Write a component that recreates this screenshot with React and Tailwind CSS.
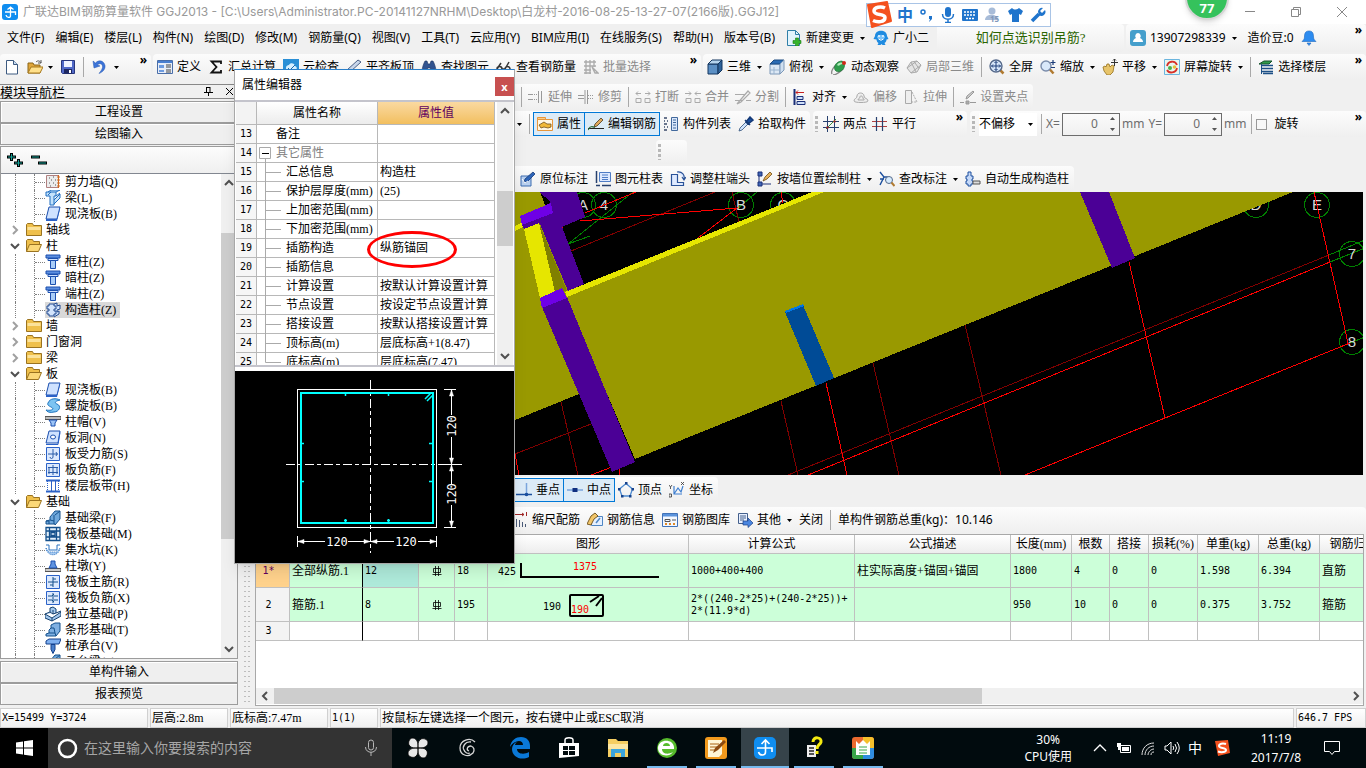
import React, { useState } from 'react';

const SIM = "font-['Liberation_Serif','Noto_Sans_CJK_SC',serif]";
const MONO = "font-['DejaVu_Sans_Mono',monospace] text-[10px]";

// toolbar and tree drawings, all on a 16 x 16 grid
const ICONS = {
    new: <><path d="M2.500 1.500h7l4 4v9.500h-11z" fill="#fff" stroke="#3d5a80" /><path d="M9.500 1.500v4h4" fill="#c7dcf2" stroke="#3d5a80" /></>,
    open: <><path d="M1 14V4h5l1 2h6v8z" fill="#e0a63a" stroke="#8a6417" /><path d="M1 14l3-6h12l-3 6z" fill="#ffe08a" stroke="#a87a1e" /><path d="M9 3c2-2 4-1 5 1m0-3v3h-3" fill="none" stroke="#555" /></>,
    save: <><path d="M1.500 1.500h13v13h-12l-1-1z" fill="#5068c8" stroke="#28367c" /><path d="M4 2h8v6H4z" fill="#eef2ff" /><path d="M4 10h8v4.500H4z" fill="#1d2760" /><path d="M9 11h2v3H9z" fill="#fff" /></>,
    undo: <path d="M2 2l1 7 6-2-2.500-1.200C9 3.500 12 5 11.500 8.500 11 11 9 13 8 14.500c4-1.500 6.500-4.500 6-8C13 2 8 0 4.500 4z" fill="#3c74d8" stroke="#2456b0" strokeWidth=".5" />,
    define: <><path d="M.5 1.500h15v13H.5z" fill="#e8eef8" stroke="#4a6ea8" /><path d="M1 2h14v2H1z" fill="#4a7fd0" /><path d="M2 6h5v3H2zM2 11h5v2H2z" fill="#6d9be0" /><path d="M9 6h5M9 8h5M9 11h5M9 13h5" stroke="#444" /></>,
    sigma: <path d="M13 5V2.500H3.500L8.500 8l-5 5.500H13V11" fill="none" stroke="#111" strokeWidth="1.800" />,
    cloud: <><path d="M0 0h16v16H0z" fill="#2a8fd6" /><path d="M3 9c0-3 3-3 3-3 1-3 6-2 6 1 3 1 2 5-1 5H5c-2 0-2-2-2-3z" fill="#d6efff" /><path d="M5 9l2 2 5-5" fill="none" stroke="#1769ae" /></>,
    slab: <><path d="M1 11L12 1l3 2L4 13z" fill="#c8d6ea" stroke="#4a5f86" /><path d="M1 13l4 2 10-4" fill="none" stroke="#e0a020" strokeWidth="2" /></>,
    find: <path d="M1 13c0-5 2-9 3-11h2l1 3h2l1-3h2c1 2 3 6 3 11H9.500V9h-3v4z" fill="#31538f" stroke="#1b3260" strokeWidth=".6" />,
    glasses: <path d="M1 10l4-6M9 10l4-7M1 10a2.500 2.500 0 1 0 5 0 2.500 2.500 0 1 0-5 0zm8 0a2.500 2.500 0 1 0 5 0 2.500 2.500 0 1 0-5 0zM6 10h3" fill="none" stroke="#333" strokeWidth="1.500" />,
    batch: <path d="M1 3h12M1 7h12M1 11h7M1 14h7M3 1v14M7 1v14M11 1v7M9 8l6 6-3 0z" fill="none" stroke="#aaa" strokeWidth="1.300" />,
    cube: <><path d="M1 5h10v10H1z" fill="#5b8fc4" stroke="#12355e" /><path d="M1 5l4-4h10l-4 4z" fill="#b5d4ee" stroke="#12355e" /><path d="M11 5l4-4v10l-4 4z" fill="#2f6299" stroke="#12355e" /></>,
    top: <><path d="M1 5h10v10H1z" fill="#dce8f5" stroke="#7c98b8" /><path d="M1 5l4-4h10l-4 4z" fill="#2b6cb5" stroke="#1c4a80" /><path d="M11 5l4-4v10l-4 4z" fill="#cfdff0" stroke="#7c98b8" /><path d="M5 8v7M1 11h10" stroke="#9ab4cf" /></>,
    orbit: <><path d="M1 15c-1-2 1-6 4-9M2 16c3 0 7-3 10-6" fill="none" stroke="#888" strokeWidth="1.300" /><path d="M4 11c-2-4 2-9 7-9 4 2 3 8-1 10-2 1-5 1-6-1z" fill="#2f9c4c" stroke="#176a30" strokeWidth=".6" /><path d="M6 6c2-3 5-3 6-1-3 0-4 3-6 1z" fill="#b4ecbc" /><circle cx="13" cy="4" r="2" fill="#d02818" /></>,
    local: <path d="M1 9l4-6 6-1 4 4-4 7-6 1zM5 3l5 10M1 9l10-7M5 14l10-8M8 2.500l5 7" fill="#e4e4e4" stroke="#aaa" />,
    fit: <><path d="M10.500 10.500l4 4" stroke="#b07a30" strokeWidth="2.500" /><circle cx="7" cy="7" r="6" fill="#d9e8fa" stroke="#55698a" strokeWidth="1.400" /><path d="M7 2.500v9M2.500 7h9M5.500 4L7 2.500 8.500 4M5.500 10L7 11.500 8.500 10M4 5.500L2.500 7 4 8.500M10 5.500L11.500 7 10 8.500" fill="none" stroke="#1c3c78" /></>,
    zoom: <><path d="M9.500 10l4 4.500" stroke="#b07a30" strokeWidth="2.500" /><circle cx="6" cy="7" r="5" fill="#d9e8fa" stroke="#7a8cab" strokeWidth="1.400" /><path d="M13 1v5M10.500 3.500h5M11 8.500h4" stroke="#1c3c78" strokeWidth="1.200" /></>,
    pan: <><path d="M1 8l2-1 1 1 1-3h2l1 3 2-2 2 1-1 6-3 3H5l-3-4z" fill="#e7c46a" stroke="#94701c" strokeWidth=".8" /><path d="M12.500 0v7M9 3.500h7M11 1.500L12.500 0 14 1.500" fill="none" stroke="#333" /></>,
    rotate: <><path d="M.5.5h15v15H.5z" fill="#e8f6f0" stroke="#6bb5de" /><path d="M3 7c1-5 8-6 10-1M13 9c-1 5-8 6-10 2" fill="none" stroke="#d83028" strokeWidth="1.800" /><circle cx="6" cy="9" r="2" fill="#4bb04b" /><circle cx="10.500" cy="8" r="1.800" fill="#e8c038" /></>,
    floors: <><path d="M1 5l5-3h8l-3 3z" fill="#2f9c4c" stroke="#14502a" /><path d="M4 6.500h11M4 9.500h11M4 12.500h11M5 14.500h10" fill="none" stroke="#1b4f86" strokeWidth="1.500" /><path d="M3.500 5v10" stroke="#1b4f86" /></>,
    extend: <><path d="M13.500 2v12M10.500 2v12M0 5.500h5M0 10.500h5" stroke="#999" fill="none" /><path d="M6 5.500h4M6 10.500h4" stroke="#999" strokeDasharray="1 1" /></>,
    trim: <><path d="M7 1v14M9.500 1v14M0 6.500h6M0 9.500h6" stroke="#999" fill="none" /><path d="M10 6.500h6M10 9.500h6" stroke="#999" strokeDasharray="1 1" /></>,
    brk: <path d="M1 4.500h5M10 4.500h5M3 2.500L1 4.500l2 2M13 2.500l2 2-2 2M1 9.500h5v4H1zM10 9.500h5v4h-5z" stroke="#aaa" fill="none" />,
    merge: <path d="M0 4.500h6M10 4.500h6M4 2.500l2 2-2 2M12 2.500l-2 2 2 2M1 9.500h5v4H1zM10 9.500h5v4h-5z" stroke="#aaa" fill="none" />,
    split: <path d="M0 5.500h10M0 11.500h8M11 11.500h5M2 15L13 2l2 2-9 9z" stroke="#aaa" fill="none" strokeWidth="1.200" />,
    align: <><path d="M2.500 0v16" stroke="#1b2f78" strokeWidth="2" /><path d="M4 3.500h8M6 1.500l-2 2 2 2" fill="none" stroke="#c82020" /><path d="M5 7.500h6v3H5zM5 12.500h8v3H5z" fill="#cfe0fa" stroke="#1b2f78" /></>,
    offset: <path d="M1 12c0-3 3-2 3-5 0-4 7-4 7 0 0 3 4 2 4 5 0 2-14 2-14 0zM5 11c0-2 2-1 2-3s3-1 3 1 2 1 1 2z" fill="#eee" stroke="#aaa" />,
    stretch: <><path d="M2.500 1.500h6v13h-6z" fill="#eee" stroke="#aaa" /><path d="M9 3l5 10H9" fill="none" stroke="#aaa" strokeDasharray="2 1" /></>,
    clip: <><path d="M0 13.500h4M10 13.500h6M6 12h3v3H6z" stroke="#999" fill="#aaa" /><path d="M6 10l1-3 6-5 1 1-6 6z" fill="#ccc" stroke="#999" /></>,
    props: <><path d="M.5 3.500h15v11H.5z" fill="#fff7e4" stroke="#e8963a" /><path d="M.5 1.500h8v2h-8z" fill="#f7ce8a" stroke="#e8963a" /><path d="M2 9l5-3 3 2h4v3l-3 1-4-1-3 1z" fill="#f0b838" stroke="#70501a" strokeWidth=".8" /></>,
    edit: <><path d="M0 12.500h16" stroke="#222" /><path d="M6 11l1-3 6-6 2 2-6 6z" fill="#e0a85c" stroke="#33270f" strokeWidth=".7" /><path d="M0 14c3-6 5-2 7-3" fill="none" stroke="#2c6a3a" strokeWidth="1.200" /></>,
    list: <><path d="M1 2h3M1 5h1M4 5h1M1 8h3M1 11h1M4 11h1M1 14h3" stroke="#3a4a6a" strokeWidth="1.500" /><path d="M8.500 1.500h6v13h-6z" fill="#dbe8fb" stroke="#41689c" /><path d="M10 4h3M10 6.500h3M10 9h3M10 12h3" stroke="#41689c" /></>,
    pick: <><path d="M1 15l1-3 6-6 2 2-6 6z" fill="#cfe4ff" stroke="#30507a" strokeWidth=".8" /><path d="M7 4l5 5M8 6l4-5 3 3-5 4z" fill="#1a4f9e" stroke="#153a78" strokeWidth="1.500" /></>,
    twopt: <><path d="M4.500 0v16M11.500 0v16M0 5.500h16M0 11.500h16" stroke="#27406e" /><path d="M3 13L13 3" stroke="#3a8a3a" /><path d="M3.500 10.500h2v2h-2zM10.500 4.500h2v2h-2z" fill="#b02020" /></>,
    parallel: <><path d="M0 5.500h15M0 10.500h15" stroke="#b04040" strokeWidth="1.200" /><path d="M4.500 1v14M10.500 1v14" stroke="#27406e" strokeWidth="1.200" /></>,
    orig: <><path d="M1 5h10v10H1z" fill="#b8d0f0" stroke="#3c6cb0" /><path d="M4 11l1-3 8-7 2 2-8 8z" fill="#2e65b8" stroke="#153a78" strokeWidth=".8" /><path d="M2 8l3 4 3-2" stroke="#fff" fill="none" /></>,
    coltable: <><path d="M1.500 0v12M1 14.500h4M7 14.500h9" stroke="#27406e" strokeWidth="1.500" /><path d="M4.500 1.500h11v9h-11z" fill="#dfeaff" stroke="#4f7cc4" /><path d="M7 4h6M7 6.500h6M7 8.500h6" stroke="#4f7cc4" /></>,
    adjust: <path d="M1.500 3.500h6v8h6v3h-12zM7 1c5-1 8 3 7 7M12 6l2 3 2-3" fill="#dfeaff" stroke="#2a5298" strokeWidth="1.200" />,
    wallcol: <><path d="M1 1h4v4H1zM1 11h4v4H1zM2 5v6M5 13h9" fill="#3f66b5" stroke="#1b2f78" /><path d="M6 10l2-4 5-5 2 2-5 5z" fill="#e8b25c" stroke="#6e4b12" strokeWidth=".8" /></>,
    check: <><path d="M1 1l4 5-4 8M5 6h4M1 8h4" stroke="#1c4f9e" fill="none" strokeWidth="1.400" /><circle cx="10" cy="9" r="3.500" fill="#d7ecff" stroke="#55698a" /><path d="M12.500 11.500l3 3.500" stroke="#b07a30" strokeWidth="2" /></>,
    autocol: <><path d="M3 1h3v4h2v3H7v2h1v3H6v2H3v-2H1v-3h1V8H1V5h2z" fill="#c5d9f8" stroke="#1c4f9e" /><path d="M8 10h7v3H8z" fill="#ddd" stroke="#555" /></>,
    perp: <><path d="M10.500 1v12" stroke="#7aa4dc" strokeWidth="1.500" /><path d="M0 12.500h16" stroke="#1b4f9e" strokeWidth="1.500" /><circle cx="10.500" cy="12.500" r="1.800" fill="#1b4f9e" /></>,
    mid: <><path d="M0 8h16" stroke="#7aa4dc" strokeWidth="1.500" /><path d="M5.500 6h5v4h-5z" fill="#102f80" /></>,
    vertex: <><path d="M8 1.500L14.500 7 12 14H4L1.500 7z" fill="none" stroke="#4d8ad0" strokeWidth="1.300" /><path d="M7 0h2.500v2.500H7zM0 6h2.500v2.500H0zM13.500 6H16v2.500h-2.500zM3 13h2.500v2.500H3zM11 13h2.500v2.500H11z" fill="#16428c" /></>,
    coord: <><path d="M5 4v8h8M5 12L9 6l3 4 2-6" fill="none" stroke="#3f7fd0" strokeWidth="1.200" /><path d="M0 3l1.500 2L3 3M1.500 5v2M12 0l3 3M15 0l-3 3M0 12h2.500v3H0z" fill="none" stroke="#333" strokeWidth=".8" /></>,
    scale: <><path d="M3 2.500h9M10 1l2 1.500L10 4M14.500 0v4" fill="none" stroke="#a02828" /><path d="M4.500 7v8M7.500 8v7M10.500 10v5M13.500 12v3" stroke="#4a5a78" /></>,
    info: <><path d="M4.500 4.500h11v9h-11z" fill="#e6f0ff" stroke="#4f86c4" /><path d="M0 12l4-8 4-3 3 3-4 3-3 6z" fill="#f2c66a" stroke="#6b4d16" strokeWidth=".9" /><path d="M9 11l4-5" stroke="#4f86c4" strokeWidth="1.500" /></>,
    lib: <><path d="M.5 1.500h15v13H.5z" fill="#f4f8ff" stroke="#4272b8" /><path d="M1 2h14v2.500H1z" fill="#5b93dc" /><path d="M3 7.500h5v2H3zM10 8h4" stroke="#555" fill="none" /><path d="M3 12h3M7 12h3M11 12h3" stroke="#e08a28" strokeWidth="2" strokeDasharray="2 2" /></>,
    other: <><path d="M1.500 1.500h9v10h-9z" fill="#e8f0ff" stroke="#44608c" /><path d="M3 4h6M3 6h6M3 8h4" stroke="#44608c" /><path d="M6 9h5V6l5 5-5 4.500V13H6z" fill="#4a86e0" stroke="#1b3f86" strokeWidth=".7" /></>,
    change: <><path d="M1.500.5h8l4 4v11h-12z" fill="#e2f4fd" stroke="#2f7fa8" /><path d="M9.500.5v4h4" fill="none" stroke="#2f7fa8" /><path d="M9.500 8h3v2.500H15v3h-2.500V16h-3v-2.500H7v-3h2.500z" fill="#35b52c" stroke="#1b7a14" strokeWidth=".6" /></>,
    mascot: <><path d="M2 6c0-7 12-7 12 0l1.500 3-2 .5c0 2-1 3-2 3.500l1 2h-3l-1-1-1 1h-3l1-2c-1-.5-2-2-2-3.500L.5 9z" fill="#1f8be0" /><path d="M4 7c1-3 7-3 8 0 0 3-8 3-8 0z" fill="#7cc4fa" /><path d="M6 5v2M10 5v2" stroke="#fff" strokeWidth="1.300" /><path d="M5.500 9q2.500 2.500 5 0" stroke="#fff" fill="none" /></>,
    user: <><rect width="16" height="16" rx="3" fill="#459fcc" /><path d="M8 3a3 3 0 0 1 2 5c2 1 3 2 3 4H3c0-2 1-3 3-4a3 3 0 0 1 2-5z" fill="#fff" /></>,
    bell: <path d="M8 1c4 0 4.500 3 4.500 6 0 2 1 3 2.500 4.500H1C2.500 10 3.500 9 3.500 7c0-3 .5-6 4.500-6zM6 13h4l-2 2.500z" fill="#2d8cf0" stroke="#1b66bd" strokeWidth=".6" />,

    wall: <><path d="M1.500 1.500h12v12h-12z" fill="#ececec" stroke="#b08080" /><path d="M13.500 1v13M12 3h3M12 6h3M12 9h3M12 12h3" stroke="#d06820" /><path d="M4 4h1M8 3h1M6 6h1M10 6h1M4 9h1M8 9h1M10 11h1M5 12h1" stroke="#555" /></>,
    beam: <path d="M1 2h10v4H9v9H5V6H1zM3 2l3-2h9l-4 2M11 6l4-3M9 10l6-6v4l-6 6M3 5l3-3" fill="#c4e2fb" stroke="#1f6dc0" />,
    plate: <><path d="M4 1h11l-3 12H1z" fill="#cfe2ff" stroke="#1b4fae" /><path d="M1 13h11l3-12v2l-3 12H1z" fill="#2b62c8" /></>,
    folder: <><path d="M.5 13.500v-11l1-1h5l1 2h8v10z" fill="#efc04c" stroke="#9a7320" /><path d="M1.500 5h13v3h-13z" fill="#fbe29a" /></>,
    folderOpen: <><path d="M.5 13.500v-11l1-1h5l1 2h6v3" fill="#efc04c" stroke="#9a7320" /><path d="M.5 13.500l3-7h12l-3 7z" fill="#fbd878" stroke="#9a7320" /></>,
    column: <><path d="M1 1h14v3H1z" fill="#5c8fe0" stroke="#1b4fae" /><path d="M3 4.500h10v2H3z" fill="#cfe2ff" stroke="#1b4fae" /><path d="M5.500 6.500h5v8h-5z" fill="#a9cdf8" stroke="#1b4fae" /></>,
    gz: <path d="M4 2h5v2h2v3H9v2h2v3H9v2H4v-2H2V9h2V7H2V4h2zM9 2l3-1v3l3-1v4l-3 1v2l2-1v3l-5 3" fill="#d3e4fc" stroke="#21498f" />,
    spiral: <path d="M3 5c2-5 8-5 12-3-5 1-6 3-3 4 5 2 2 8-3 8-4 1-7 0-8-2 6 1 9-1 5-3-2-1-4-2-3-4z" fill="#7cc4f2" stroke="#1c72bd" />,
    cap: <><path d="M0 2.500h16v3H0z" fill="#bbb" stroke="#555" /><path d="M4 6h8l-2 3v3H6V9z" fill="#9cc4f6" stroke="#1b4fae" /></>,
    hole: <><path d="M4 1h11l-2 12H1z" fill="#cfe2ff" stroke="#1b4fae" /><path d="M1 14.500h12l2-12" fill="none" stroke="#2b62c8" /><ellipse cx="8" cy="7" rx="2.500" ry="2" fill="#fff" stroke="#1b4fae" /></>,
    forced: <><path d="M1.500 1.500h13v13h-13z" fill="#dce9fd" stroke="#2b62c8" /><path d="M3 8h10M8 3v8c0 2-3 2-3 0M11 6q2 2 0 4" fill="none" stroke="#2b5ca8" /></>,
    negative: <><path d="M1.500 1.500h13v13h-13z" fill="#dce9fd" stroke="#2b62c8" /><path d="M3 5.500h10M3 10.500h10M8 3v10M4 5v7M12 5v7" fill="none" stroke="#2b5ca8" /></>,
    band: <><path d="M1 2.500h14M1 13.500h14" stroke="#2b62c8" strokeWidth="2" /><path d="M2.500 3v10M13.500 3v10" stroke="#2b62c8" strokeDasharray="1 1" /><path d="M6.500 3v10M10.500 3v10" stroke="#2b62c8" /></>,
    fbeam: <path d="M1 14v-3l4-1V7l5-6h5v8l-5 6v-1zM5 10l4 1v3M9 5v6M10 5l5-4M1 11h3v3" fill="#6fa8dc" stroke="#14508c" />,
    raft: <path d="M1 1.500h14v13H1zM4.500 1v14M11.500 1v14M1 5h14M1 11h14M6 6.500h4v3H6z" fill="#e3f0fb" stroke="#14508c" strokeWidth="1.300" />,
    pit: <><path d="M1 3h3v5h8V3h3" fill="none" stroke="#2b72c0" /><path d="M1 6c1 9 13 9 14 0l-3 4H4z" fill="#a8cbf2" stroke="#2b72c0" strokeDasharray="1 1" /></>,
    pier: <><path d="M0 10.500h16v3H0z" fill="#ccc" stroke="#555" /><path d="M6 3h4v3l2 4H4l2-4z" fill="#5f93e0" stroke="#1b4fae" /></>,
    mainbar: <><path d="M1.500 1.500h13v13h-13z" fill="#dce9fd" stroke="#2b62c8" /><path d="M3 8h10M8 3v10M8 5h3M5 11h3" fill="none" stroke="#14508c" /></>,
    negbar: <><path d="M1.500 1.500h13v13h-13z" fill="#dce9fd" stroke="#2b62c8" /><path d="M3 6h4l2-2M13 6H9M3 10h4l2 2M13 10H9M8 3v10" fill="none" stroke="#14508c" /></>,
    indep: <path d="M0 8l5-2V2l3-1 3 2v4l5-2v5l-9 5-7-3zM5 6l3 2 3-1M8 8V4M0 8l7 4 9-6M7 12v3" fill="#a3c8ee" stroke="#14406e" />,
    strip: <path d="M1 14v-2l3-1V8l2-2V3l4-2h5v8l-4 5zM4 11h6l1 3M6 6h3l1 5" fill="#7fb0e2" stroke="#14508c" />,
    pile: <><path d="M1 3l3-2h12l-2 5H1z" fill="#7fb0f0" stroke="#14408c" /><path d="M6 6.500h4v5l-2 4-2-4z" fill="#4a80cc" stroke="#14408c" /></>,
};

const Icon = ({ name }) => (
    <svg className="size-4 shrink-0" viewBox="0 0 16 16" aria-hidden="true">{ICONS[name]}</svg>
);

const Arrow = () => (
    <svg className="w-[5px] h-[3px] shrink-0" viewBox="0 0 5 3" aria-hidden="true"><path d="M0 0h5L2.500 3z" fill="#000" /></svg>
);

const Sep = () => <span className="w-px h-5 bg-[#a8a8a8] shrink-0" />;

const Grip = () => <span className="w-[3px] h-4 shrink-0 bg-[repeating-linear-gradient(#b8b8b8_0_3px,transparent_3px_5px)]" />;

const More = () => <button aria-label="更多" className="self-start font-bold leading-3 shrink-0">»</button>;

const Tool = ({ icon, label, arrow, dim }) => (
    <button className={`flex items-center gap-1 shrink-0 whitespace-nowrap ${dim ? 'text-[#8a8a8a]' : 'text-black'}`}>
        {icon && <Icon name={icon} />}
        {label}
        {arrow && <span className="pl-0.5"><Arrow /></span>}
    </button>
);

const BoxTool = ({ icon, label }) => (
    <button className="flex items-center gap-1 px-[3px] h-6 shrink-0 whitespace-nowrap bg-[#dcebf7] border border-[#0078d7] not-first:-ml-px">
        <Icon name={icon} />
        {label}
    </button>
);

const Strip = ({ className = '', gap = 'gap-[7px]', children }) => (
    <div className={`flex items-center h-full ${gap} rounded-sm bg-linear-to-b from-[#fcfcfc] to-[#efefef] shrink-0 ${className}`}>
        {children}
    </div>
);

const Chevron = ({ d, dark = '#505050' }) => (
    <svg className="w-[10px] h-[10px] shrink-0" viewBox="0 0 10 10" aria-hidden="true"><path d={d} fill="none" stroke={dark} strokeWidth="2" /></svg>
);
const UP = 'M1 7l4-4 4 4';
const DOWN = 'M1 3l4 4 4-4';
const LEFT = 'M7 1L3 5l4 4';
const RIGHT = 'M3 1l4 4-4 4';

const MENUS = ['文件(F)', '编辑(E)', '楼层(L)', '构件(N)', '绘图(D)', '修改(M)', '钢筋量(Q)', '视图(V)', '工具(T)', '云应用(Y)', 'BIM应用(I)', '在线服务(S)', '帮助(H)', '版本号(B)'];

const TREE = [
    ['wall', '剪力墙(Q)'], ['beam', '梁(L)'], ['plate', '现浇板(B)'],
    ['closed', '轴线'],
    ['opened', '柱'],
    ['column', '框柱(Z)'], ['column', '暗柱(Z)'], ['column', '端柱(Z)'], ['gz', '构造柱(Z)'],
    ['closed', '墙'], ['closed', '门窗洞'], ['closed', '梁'],
    ['opened', '板'],
    ['plate', '现浇板(B)'], ['spiral', '螺旋板(B)'], ['cap', '柱帽(V)'], ['hole', '板洞(N)'],
    ['forced', '板受力筋(S)'], ['negative', '板负筋(F)'], ['band', '楼层板带(H)'],
    ['opened', '基础'],
    ['fbeam', '基础梁(F)'], ['raft', '筏板基础(M)'], ['pit', '集水坑(K)'], ['pier', '柱墩(Y)'],
    ['mainbar', '筏板主筋(R)'], ['negbar', '筏板负筋(X)'], ['indep', '独立基础(P)'],
    ['strip', '条形基础(T)'], ['pile', '桩承台(V)'], ['fbeam', '承台梁(F)'],
];

const PROPS = [
    [13, '备注', ''],
    [14, '其它属性', ''],
    [15, '汇总信息', '构造柱'],
    [16, '保护层厚度(mm)', '(25)'],
    [17, '上加密范围(mm)', ''],
    [18, '下加密范围(mm)', ''],
    [19, '插筋构造', '纵筋锚固'],
    [20, '插筋信息', ''],
    [21, '计算设置', '按默认计算设置计算'],
    [22, '节点设置', '按设定节点设置计算'],
    [23, '搭接设置', '按默认搭接设置计算'],
    [24, '顶标高(m)', '层底标高+1(8.47)'],
    [25, '底标高(m)', '层底标高(7.47)'],
];

function TitleBar() {
    return (
        <header className="relative flex items-center h-6 bg-white pl-0.5 shrink-0">
            <svg className="size-4 shrink-0" viewBox="0 0 16 16" aria-hidden="true">
                <rect width="16" height="16" rx="3" fill="#0f8df0" />
                <path d="M8.500 3v9c0 2-4 2-4.500-1M3 8h10.500v3M5.500 5.500l3-2.500 3 2.500" fill="none" stroke="#fff" strokeWidth="1.300" />
            </svg>
            <h1 className="ml-[5px] whitespace-pre text-[#999] font-['Inter','Noto_Sans_CJK_SC',sans-serif]">广联达BIM钢筋算量软件 GGJ2013 - [C:\Users\Administrator.PC-20141127NRHM\Desktop\白龙村-2016-08-25-13-27-07(2166版).GGJ12]</h1>
            <div className="ml-auto flex items-center gap-[34px] pr-[18px]">
                <button aria-label="最小化"><svg className="size-3" viewBox="0 0 12 12"><path d="M1 5.500h10" stroke="#888" /></svg></button>
                <button aria-label="还原"><svg className="size-3" viewBox="0 0 12 12"><path d="M1.500 3.500h7v7h-7zM3.500 3.500v-2h7v7h-2" fill="none" stroke="#888" /></svg></button>
                <button aria-label="关闭窗口"><svg className="size-3" viewBox="0 0 12 12"><path d="M1 1l10 10M11 1L1 11" stroke="#888" /></svg></button>
            </div>
            <SogouBar />
            <div className="absolute right-[137px] -top-6 size-11 rounded-full bg-[#35c25c] border-2 border-[#d6d6d6] shadow-md text-white font-bold text-[13px] leading-3 flex items-end justify-center pb-1">77</div>
        </header>
    );
}

// input method bar that floats over the title
function SogouBar() {
    return (
        <div className="absolute right-[315px] top-[3px] z-20 flex items-center gap-[7px] h-6 pl-[30px] pr-1 bg-white border border-[#a9c4e6] text-[#1f74cc]">
            <svg className="absolute -left-[3px] -top-[3px] w-[29px] h-[27px]" viewBox="0 0 29 27" aria-hidden="true">
                <path d="M4 4l19-3 4 19-19 6z" fill="#f4511e" stroke="#f4511e" strokeWidth="2" strokeLinejoin="round" />
                <path d="M21 7c-4-2-11-1-11 3 0 5 11 2 11 6.500 0 5-8 5-12 3" fill="none" stroke="#fff" strokeWidth="3.500" />
            </svg>
            <span className="font-bold text-base leading-4">中</span>
            <svg className="w-[14px] h-4" viewBox="0 0 14 16"><circle cx="3" cy="5" r="2" fill="none" stroke="#1f74cc" strokeWidth="1.500" /><path d="M9 9h3v3l-3 3 1-3H9z" fill="#1f74cc" /></svg>
            <svg className="w-[14px] h-4" viewBox="0 0 14 16"><rect x="4" y="0" width="6" height="10" rx="3" fill="#1f74cc" /><path d="M1.500 7c0 7 11 7 11 0M7 12v3M4 15.500h6" fill="none" stroke="#1f74cc" strokeWidth="1.500" /></svg>
            <svg className="w-4 h-4" viewBox="0 0 16 16"><rect y="2" width="16" height="12" rx="1" fill="#1f74cc" /><path d="M2 5h12M2 8h12M4 11.500h8" stroke="#fff" strokeWidth="1.500" strokeDasharray="2 1" /></svg>
            <svg className="w-4 h-4" viewBox="0 0 16 16"><circle cx="7" cy="4" r="3.500" fill="#a8bcd8" /><path d="M0 13c0-7 13-7 13 0z" fill="#a8bcd8" /><text x="5" y="15" fontSize="8" fontWeight="bold" fill="#8097ba">15</text></svg>
            <svg className="w-[15px] h-4" viewBox="0 0 15 16"><path d="M0 4l4-3c2 2 5 2 7 0l4 3-2 4-2-1v8H4V7L2 8z" fill="#1f74cc" /></svg>
            <svg className="w-4 h-4" viewBox="0 0 16 16"><path d="M2 14l7-7" stroke="#1f74cc" strokeWidth="3.500" /><path d="M14 2l-3 3M8 5a4 4 0 0 1 5-4l-3 3 2 2 3-3a4 4 0 0 1-6 5z" fill="#1f74cc" /></svg>
        </div>
    );
}

function MenuRow() {
    return (
        <nav className="flex items-center h-7 shrink-0 whitespace-nowrap">
            <div className="flex items-center gap-[11px] pl-[7px] shrink-0">
                {MENUS.map(m => <button key={m}>{m}</button>)}
                <div className="flex items-center gap-2">
                    <Tool icon="change" label="新建变更" arrow />
                    <Tool icon="mascot" label="广小二" />
                </div>
            </div>
            <Strip className="ml-2 flex-1 justify-center">
                <a href="#tips" className={`${SIM} text-[13px] text-[#2b6500]`}>如何点选识别吊筋?</a>
            </Strip>
            <Strip className="ml-0.5 pl-1 pr-1 w-[240px]">
                <Tool icon="user" label="13907298339" arrow />
                <span className="pl-1">造价豆:0</span>
                <Tool icon="bell" />
                <span className="ml-auto h-full flex"><More /></span>
            </Strip>
        </nav>
    );
}

function MainTools() {
    return (
        <div className="flex h-[26px] mt-0.5 mb-1 gap-0.5 shrink-0">
            <Strip className="w-[151px] pl-1 pr-1">
                <Tool icon="new" />
                <span className="flex items-center gap-[5px]"><Icon name="open" /><Arrow /></span>
                <Tool icon="save" />
                <Sep />
                <span className="flex items-center gap-[7px]"><Icon name="undo" /><Arrow /></span>
                <span className="ml-auto h-full flex"><More /></span>
            </Strip>
            <Strip className="w-[548px] pl-1 pr-1">
                <Tool icon="define" label="定义" />
                <Tool icon="sigma" label="汇总计算" />
                <Tool icon="cloud" label="云检查" />
                <Tool icon="slab" label="平齐板顶" />
                <Tool icon="find" label="查找图元" />
                <Tool icon="glasses" label="查看钢筋量" />
                <Tool icon="batch" label="批量选择" dim />
                <span className="ml-auto h-full flex"><More /></span>
            </Strip>
            <Strip className="flex-1 pl-1 pr-1">
                <Tool icon="cube" label="三维" arrow />
                <Tool icon="top" label="俯视" arrow />
                <Tool icon="orbit" label="动态观察" />
                <Tool icon="local" label="局部三维" dim />
                <Sep />
                <Tool icon="fit" label="全屏" />
                <Tool icon="zoom" label="缩放" arrow />
                <Tool icon="pan" label="平移" arrow />
                <Tool icon="rotate" label="屏幕旋转" arrow />
                <Sep />
                <Tool icon="floors" label="选择楼层" />
                <span className="ml-auto h-full flex"><More /></span>
            </Strip>
        </div>
    );
}

const PaneButton = ({ children }) => (
    <button className="h-[22px] shrink-0 w-full bg-[#efefef] border border-[#9c9c9c] shadow-[inset_1px_1px_0_#fff] leading-4">{children}</button>
);

function NavPane() {
    return (
        <aside className="w-[238px] shrink-0 flex flex-col bg-[#f0f0f0]">
            <div className="flex items-center h-[15px] border-y border-[#888] text-[13px] leading-3 pr-1 gap-3">
                <span className="mr-auto">模块导航栏</span>
                <svg className="size-[9px]" viewBox="0 0 9 9" aria-hidden="true"><path d="M2.500 0v5M6 0v5M2 .5h4M0 5.500h9M4.500 6v3" stroke="#000" fill="none" /></svg>
                <svg className="size-[9px]" viewBox="0 0 9 9" aria-hidden="true"><path d="M1 1l7 7M8 1L1 8" stroke="#000" fill="none" /></svg>
            </div>
            <div className="flex flex-col pt-0.5">
                <PaneButton>工程设置</PaneButton>
                <PaneButton>绘图输入</PaneButton>
            </div>
            <div className="flex flex-col flex-1 min-h-0 mt-px border border-[#9c9c9c]">
                <div className="flex items-center gap-2 h-[26px] shrink-0 pl-1.5 bg-linear-to-b from-[#fcfcfc] to-[#efefef]">
                    <svg className="w-4 h-4" viewBox="0 0 16 16" aria-label="全部展开"><path d="M0 5h9M4.500 1v8M7 11h9M11.500 7v8" stroke="#000" strokeWidth="3" /><path d="M1 5h7M4.500 2v6M8 11h7M11.500 8v6" stroke="#12a096" strokeWidth="1" /></svg>
                    <svg className="w-4 h-4" viewBox="0 0 16 16" aria-label="全部折叠"><path d="M0 5h9M7 11h9" stroke="#000" strokeWidth="3" /><path d="M1 5h7M8 11h7" stroke="#12a096" /></svg>
                </div>
                <div className="flex flex-1 min-h-0 pl-px border-t border-[#828790] bg-white overflow-hidden">
                    <ul className="flex-1 overflow-hidden">
                        {TREE.map(([kind, label], i) => {
                            const parent = kind === 'closed' || kind === 'opened';
                            const picked = label === '构造柱(Z)';
                            return (
                                <li key={i} className="flex h-4">
                                    {parent ? (
                                        <>
                                            <span className="w-6 pl-2 flex items-center">
                                                {kind === 'closed' ? <Chevron d={RIGHT} dark="#a0a0a0" /> : <Chevron d={DOWN} />}
                                            </span>
                                            <button className={`${SIM} flex items-center gap-1 leading-4`}>
                                                <Icon name={kind === 'opened' ? 'folderOpen' : 'folder'} />{label}
                                            </button>
                                        </>
                                    ) : (
                                        <>
                                            <span className="ml-[13px] w-[19px] border-l border-dotted border-[#808080]" />
                                            <span className="w-[11px] border-l border-dotted border-[#808080] flex items-center"><span className="w-full border-t border-dotted border-[#808080]" /></span>
                                            <button className={`${SIM} flex items-center gap-1 leading-4 pr-1 ${picked ? 'bg-[#d9d9d9]' : ''}`}>
                                                <Icon name={kind} />{label}
                                            </button>
                                        </>
                                    )}
                                </li>
                            );
                        })}
                    </ul>
                    <div className="w-4 bg-[#f0f0f0] flex flex-col items-center">
                        <span className="h-[59px] pt-1"><Chevron d={UP} /></span>
                        <span className="w-full flex-1 max-h-[306px] bg-[#cdcdcd]" />
                        <span className="mt-auto pb-1"><Chevron d={DOWN} /></span>
                    </div>
                </div>
            </div>
            <div className="flex flex-col pt-0.5 pb-px">
                <PaneButton>单构件输入</PaneButton>
                <PaneButton>报表预览</PaneButton>
            </div>
        </aside>
    );
}

const Spin = ({ id, label }) => (
    <div className="flex items-center gap-0.5 text-[#6d6d6d] shrink-0">
        <label htmlFor={id}>{label}</label>
        <div className="flex items-center w-[58px] h-[23px] border border-[#6d6d6d] pr-1">
            <input id={id} defaultValue="0" className="w-full min-w-0 bg-transparent text-right pr-3 outline-none" />
            <svg className="w-[5px] h-4 shrink-0" viewBox="0 0 5 16" aria-hidden="true"><path d="M0 4l2.500-3L5 4zM0 12l2.500 3L5 12z" fill="#555" /></svg>
        </div>
        <span>mm</span>
    </div>
);

function EditTools() {
    const [rotated, setRotated] = useState(false);
    return (
        <>
            <div className="flex h-[26px] shrink-0">
                <Strip className="pl-[283px] pr-[5px]" gap="gap-1.5">
                    <Sep />
                    <Tool icon="extend" label="延伸" dim />
                    <Tool icon="trim" label="修剪" dim />
                    <Sep />
                    <Tool icon="brk" label="打断" dim />
                    <Tool icon="merge" label="合并" dim />
                    <Tool icon="split" label="分割" dim />
                    <Sep />
                    <Tool icon="align" label="对齐" arrow />
                    <Tool icon="offset" label="偏移" dim />
                    <Tool icon="stretch" label="拉伸" dim />
                    <Sep />
                    <Tool icon="clip" label="设置夹点" dim />
                </Strip>
            </div>
            <div className="flex h-[26px] mt-px gap-[3px] shrink-0">
                <Strip className="pl-[279px] pr-1">
                    <Arrow />
                    <Sep />
                    <div className="flex -ml-1 -mr-1">
                        <BoxTool icon="props" label="属性" />
                        <BoxTool icon="edit" label="编辑钢筋" />
                    </div>
                    <Tool icon="list" label="构件列表" />
                    <Tool icon="pick" label="拾取构件" />
                </Strip>
                <Strip className="w-[154px] pl-0.5 pr-1" gap="gap-[5px]">
                    <Grip />
                    <Tool icon="twopt" label="两点" />
                    <Tool icon="parallel" label="平行" />
                    <span className="ml-auto h-full flex"><More /></span>
                </Strip>
                <Strip className="flex-1 pl-0.5 pr-1" gap="gap-1">
                    <Grip />
                    <div className="relative flex items-center">
                        <select aria-label="偏移方式" className="appearance-none bg-white h-[23px] w-[58px] pl-0 outline-none">
                            <option>不偏移</option>
                        </select>
                        <span className="absolute right-1 pointer-events-none flex"><Arrow /></span>
                    </div>
                    <Sep />
                    <Spin id="dx" label="X=" />
                    <Spin id="dy" label="Y=" />
                    <Sep />
                    <label className="flex items-center gap-2">
                        <input type="checkbox" checked={rotated} onChange={e => setRotated(e.target.checked)} className="appearance-none size-[11px] border border-[#999] bg-[#f8f8f8]" />
                        旋转
                    </label>
                    <span className="ml-auto h-full flex"><More /></span>
                </Strip>
            </div>
            <div className="flex h-6 mt-[3px] shrink-0 pl-[418px]">
                <Strip className="w-[31px] pl-0.5"><Grip /></Strip>
            </div>
            <div className="flex h-[26px] mt-0.5 shrink-0">
                <Strip className="pl-[282px] pr-[5px]">
                    <Tool icon="orig" label="原位标注" />
                    <Tool icon="coltable" label="图元柱表" />
                    <Tool icon="adjust" label="调整柱端头" />
                    <Tool icon="wallcol" label="按墙位置绘制柱" arrow />
                    <Tool icon="check" label="查改标注" arrow />
                    <Tool icon="autocol" label="自动生成构造柱" />
                </Strip>
            </div>
        </>
    );
}

const AXES = [['A', 583, 205], ['4', 604, 205], ['B', 741, 205], ['C', 783, 205], ['D', 1256, 205], ['E', 1317, 205], ['7', 1352, 254], ['8', 1352, 342]];

function Model() {
    return (
        <div className="flex-1 min-h-0 mr-[3px] bg-black overflow-hidden">
            <svg className="w-full h-full block" viewBox="238 192 1125 283" preserveAspectRatio="xMinYMin slice" shapeRendering="crispEdges" aria-label="三维模型">
                <g fill="none" stroke="#008000">
                    {AXES.map(([t, x, y]) => <circle key={t} cx={x} cy={y} r="12.500" />)}
                    <path d="M633 192L568 244L590 236M757 192L737 209M1329 255L1365 240M1330 262L1365 248M1350 343L1365 337" />
                </g>
                <g fill="#d8d8d8" fontSize="15" textAnchor="middle" fontFamily="Liberation Sans" shapeRendering="auto">
                    {AXES.map(([t, x, y]) => <text key={t} x={x} y={y + 5}>{t}</text>)}
                </g>
                <path d="M715 192L571 251M732 192L739 222M561 402L578 475M515 454L591 424M781 401L798 475M873 363L899 475M788 475L1329 255M965 325L1001 475" fill="none" stroke="#800000" />
                <path d="M580 221L737 208L698 238M636 192L585 213M781 192L783 203M562 227L566 243M515 454L519 475M591 475L612 467M619 469L620 475M826 383L847 475M808 475L1330 262M1129 262L1165 418M1025 475L1165 418L1350 343M1314 192L1348 343" fill="none" stroke="#f00" />
                <path d="M238 192H540L582 300 579 394 515 420 238 530z" fill="#990" />
                <path d="M515 226l8-4v5l-8 4z" fill="#e6e600" />
                <path d="M539 192h38l8 25-23 10 22 57-16 7-28-67-14-4 25-18z" fill="#4b0096" />
                <path d="M520 216l31-13 2 10-31 12z" fill="#6e00e6" />
                <path d="M522 225l31-12v7l-29 9z" fill="#4b0096" />
                <path d="M539 223l28 68-12 2z" fill="#808000" />
                <path d="M524 229l15-6 16 69-15 6z" fill="#e6e600" />
                <path d="M565 296L824 192H1293L635 459z" fill="#990" />
                <path d="M565 292L812 192h12L567 297z" fill="#e6e600" />
                <path d="M542 307l25-10 68 165-23 10z" fill="#4b0096" />
                <path d="M540 298l22-10 5 10-25 10z" fill="#6e00e6" />
                <path d="M785 312l18-7 31 73-18 8z" fill="#004b96" />
                <path d="M785 311l18-7 1 2-18 7z" fill="#0078e6" />
                <path d="M1080 192h29l26 66-23 10z" fill="#4b0096" />
            </svg>
        </div>
    );
}

const HEAD = ['', '', '', '', '', '图形', '计算公式', '公式描述', '长度(mm)', '根数', '搭接', '损耗(%)', '单重(kg)', '总重(kg)', '钢筋归类'];
const COLS = ['w-[34px]', 'w-[73px]', 'w-[56px]', 'w-[36px]', 'w-[33px]', 'w-[201px]', 'w-[166px]', 'w-[156px]', 'w-[61px]', 'w-[38px]', 'w-[39px]', 'w-[49px]', 'w-[61px]', 'w-[61px]', 'w-[68px]'];

const BentBar = () => (
    <svg className="block h-[33px] w-[200px]" viewBox="488 554 200 33" aria-hidden="true">
        <path d="M521 563v14h138" fill="none" stroke="#000" strokeWidth="2" />
        <g fontFamily="DejaVu Sans Mono" fontSize="10"><text x="498" y="575">425</text><text x="573" y="570" fill="#f00">1375</text></g>
    </svg>
);

const Stirrup = () => (
    <svg className="block h-[33px] w-[200px]" viewBox="488 588 200 33" aria-hidden="true">
        <rect x="570" y="595" width="33" height="21" rx="1" fill="none" stroke="#000" strokeWidth="2" />
        <path d="M590 602l9-6M596 606l6-8" stroke="#000" strokeWidth="2" />
        <g fontFamily="DejaVu Sans Mono" fontSize="10"><text x="543" y="610">190</text><text x="571" y="613" fill="#f00">190</text></g>
    </svg>
);

// grade III bar mark
const BarMark = () => (
    <svg className="block w-3 h-3 mx-auto" viewBox="0 0 12 12" aria-label="三级钢"><path d="M2.500 3.500h7v4h-7zM4.500 1v10M7.500 1v10M1.500 9.500h9" fill="none" stroke="#000" strokeWidth=".8" /></svg>
);

const BARS = [
    ['1*', '全部纵筋.1', '12', <BarMark />, '18', <BentBar />, '1000+400+400', '柱实际高度+锚固+锚固', '1800', '4', '0', '0', '1.598', '6.394', '直筋'],
    ['2', '箍筋.1', '8', <BarMark />, '195', <Stirrup />, '2*((240-2*25)+(240-2*25))+ 2*(11.9*d)', '', '950', '10', '0', '0', '0.375', '3.752', '箍筋'],
    ['3', '', '', '', '', '', '', '', '', '', '', '', '', '', ''],
];

function BarTable() {
    return (
        <div className="flex-1 min-w-0 mr-0.5 flex flex-col h-[172px] border border-[#a8a8a8] bg-white overflow-hidden">
            <div className="flex-1 overflow-hidden">
                <table className="table-fixed w-[1132px] border-separate border-spacing-0">
                    <colgroup>{COLS.map((c, i) => <col key={i} className={c} />)}</colgroup>
                    <thead>
                        <tr className={`${SIM} h-[19px] bg-linear-to-b from-white to-[#ececec]`}>
                            {HEAD.map((h, i) => <th key={i} className="p-0 font-normal leading-4 border-r border-b border-[#c0c0c0] whitespace-nowrap">{h}</th>)}
                        </tr>
                    </thead>
                    <tbody>
                        {BARS.map((row, r) => (
                            <tr key={r} className={r < 2 ? 'h-[34px] bg-[#ccffd9]' : 'h-[19px]'}>
                                {row.map((c, i) => {
                                    const ascii = typeof c === 'string' && /^[\x20-\x7e]*$/.test(c);
                                    const bg = i === 0 ? (r === 0 ? 'bg-[#ffd28c] text-[#600060]' : 'bg-[#f3f3f3]') : (r === 0 && i === 2 ? 'bg-[#aeeada]' : '');
                                    return (
                                        <td key={i} className={`p-0 border-b leading-3 border-[#c0c0c0] border-r ${i === 1 ? 'border-r-black' : ''} ${i === 0 ? 'text-center pr-2' : i === 5 || i === 3 ? '' : 'pl-0.5'} ${ascii ? MONO : SIM} ${bg}`}>{c}</td>
                                    );
                                })}
                            </tr>
                        ))}
                    </tbody>
                </table>
            </div>
            <div className="flex items-center h-4 mb-px bg-[#f0f0f0]">
                <span className="w-[18px] flex justify-center"><Chevron d={LEFT} /></span>
                <span className="h-full w-[64%] bg-[#cdcdcd]" />
                <span className="ml-auto mr-0.5 flex"><Chevron d={RIGHT} /></span>
            </div>
        </div>
    );
}

function BottomPanel() {
    return (
        <>
            <div className="flex h-[25px] mt-0.5 shrink-0">
                <Strip className="pl-[274px] pr-[5px]">
                    <div className="flex -mr-1">
                        <BoxTool icon="perp" label="垂点" />
                        <BoxTool icon="mid" label="中点" />
                    </div>
                    <Tool icon="vertex" label="顶点" />
                    <Tool icon="coord" label="坐标" />
                </Strip>
            </div>
            <div className="flex h-[26px] mt-[5px] shrink-0">
                <Strip className="flex-1 pl-[274px]">
                    <Tool icon="scale" label="缩尺配筋" />
                    <Tool icon="info" label="钢筋信息" />
                    <Tool icon="lib" label="钢筋图库" />
                    <Tool icon="other" label="其他" arrow />
                    <Tool label="关闭" />
                    <Sep />
                    <span className="whitespace-nowrap">单构件钢筋总重(kg)：10.146</span>
                </Strip>
            </div>
            <div className="flex shrink-0 mt-px">
                <div className="w-[17px] shrink-0 flex justify-center">
                    <span className="w-2 h-full bg-[radial-gradient(circle,#bdbdbd_1px,transparent_1px)] bg-[size:4px_5px]" />
                </div>
                <BarTable />
            </div>
        </>
    );
}

function PropertyDialog() {
    return (
        <section className="absolute left-[234px] top-[69px] w-[281px] z-10 bg-white border border-[#a8a8a8] border-t-[#2a7fc9] shadow-lg" aria-label="属性编辑器">
            <div className="flex items-start justify-between h-[30px] pl-[7px]">
                <h2 className="leading-[30px]">属性编辑器</h2>
                <button aria-label="关闭" className="mt-[7px] w-[19px] h-[19px] bg-[#c75050] text-white font-bold text-[11px] leading-4">x</button>
            </div>
            <div className="flex h-[267px] border-y-2 border-[#c4c4cc] pl-px overflow-hidden">
                <div className="relative w-[259px] overflow-hidden">
                    <table className={`${SIM} table-fixed w-full border-separate border-spacing-0`}>
                        <colgroup><col className="w-[21px]" /><col className="w-[121px]" /><col className="w-[117px]" /></colgroup>
                        <thead>
                            <tr className="h-[23px]">
                                <th className="border-r border-b border-[#b8b8b8] bg-[#f3f3f3]" />
                                <th className="p-0 font-normal border-r border-b border-[#b8b8b8] bg-linear-to-b from-white to-[#ececec]">属性名称</th>
                                <th className="p-0 font-normal border-r border-b border-[#b8b8b8] bg-linear-to-b from-[#fad9a0] to-[#f2bf5e] text-[#600060]">属性值</th>
                            </tr>
                        </thead>
                        <tbody>
                            {PROPS.map(([n, name, value]) => (
                                <tr key={n} className="h-[19px]">
                                    <td className={`${MONO} p-0 text-center border-r border-b border-[#b8b8b8] bg-[#f6f6f6]`}>{n}</td>
                                    <td className="p-0 border-r border-b border-[#b8b8b8]">
                                        <div className="flex items-center h-[18px] leading-4 whitespace-nowrap">
                                            <svg className={`${n > 14 ? 'w-[29px]' : 'w-[19px]'} h-[19px] shrink-0`} viewBox={n > 14 ? '0 0 29 19' : '0 0 19 19'} aria-hidden="true">
                                                {n === 14 && <path d="M2.500 3.500h11v11h-11zM8.500 15v4" fill="none" stroke="#aaa" />}
                                                {n === 14 && <path d="M5 9.500h7" stroke="#000" />}
                                                {n > 14 && <path d={n === 25 ? 'M8.500 0v9.500H24' : 'M8.500 0v19M8 9.500h16'} fill="none" stroke="#aaa" />}
                                            </svg>
                                            <span className={n === 14 ? 'text-[#808080]' : ''}>{name}</span>
                                        </div>
                                    </td>
                                    <td className="p-0 pl-0.5 border-r border-b border-[#b8b8b8] leading-4 whitespace-nowrap">{value}</td>
                                </tr>
                            ))}
                        </tbody>
                    </table>
                    <span className="absolute left-[131px] top-[129px] w-[90px] h-[37px] rounded-[50%] border-3 border-[#f00]" />
                </div>
                <div className="w-4 ml-0.5 bg-[#f0f0f0] flex flex-col items-center">
                    <span className="h-[89px] pt-1"><Chevron d={UP} /></span>
                    <span className="w-full h-[55px] bg-[#cdcdcd]" />
                    <span className="mt-auto pb-1"><Chevron d={DOWN} /></span>
                </div>
            </div>
            <svg className="block w-full h-[192px] mt-1 bg-black" viewBox="235 371 279 192" aria-label="截面图">
                <g fill="none" stroke="#fff" shapeRendering="crispEdges">
                    <rect x="297.500" y="389.500" width="139" height="138" />
                    <path d="M370.500 380v173" strokeDasharray="9 3 4 3" />
                    <path d="M286 464.500h176" strokeDasharray="9 3 4 3" />
                    <path d="M451.500 389v26M451.500 437v47M451.500 505v23M444 389.500h12M444 464.500h17M444 527.500h12" />
                    <path d="M297 541.500h28M348 541.500h46M418 541.500h18M297.500 536v11M436.500 536v11" />
                </g>
                <path d="M449.500 396h4l-2-6zM449.500 458h4l-2 6zM449.500 471h4l-2-6zM449.500 521h4l-2 6zM304 539.500v4l-6-2zM364 539.500v4l6-2zM377 539.500v4l-6-2zM430 539.500v4l6-2z" fill="#fff" stroke="#fff" strokeWidth=".5" />
                <rect x="301" y="393" width="132" height="130" fill="none" stroke="#0ff" strokeWidth="2" />
                <path d="M345.500 393v3M388.500 393v3M344 520.500h3M345.500 519v4M387 520.500h3M388.500 519v4M301 443.500h3M429 443.500h4M301 481.500h3M429 481.500h4M425 399l6-6M427 401l6-6" stroke="#0ff" strokeWidth="1.500" />
                <g fill="#fff" fontSize="12" textAnchor="middle" fontFamily="DejaVu Sans Mono">
                    <text x="337" y="546">120</text>
                    <text x="406" y="546">120</text>
                    <text x="456" y="426" transform="rotate(-90 456 426)">120</text>
                    <text x="456" y="494" transform="rotate(-90 456 494)">120</text>
                </g>
            </svg>
        </section>
    );
}

const Cell = ({ className, children }) => (
    <span className={`h-full flex items-center pl-px border border-[#d0d0d0] bg-linear-to-b from-white to-[#f0f0f0] whitespace-nowrap ${className}`}>{children}</span>
);

function StatusBar() {
    return (
        <footer className={`${SIM} flex h-5 mt-0.5 gap-0.5 shrink-0 leading-4`}>
            <Cell className={`${MONO} w-[148px]`}>X=15499 Y=3724</Cell>
            <Cell className="w-[78px]">层高:2.8m</Cell>
            <Cell className="w-[98px]">底标高:7.47m</Cell>
            <Cell className={`${MONO} w-[48px]`}>1(1)</Cell>
            <Cell className="flex-1">按鼠标左键选择一个图元，按右键中止或ESC取消</Cell>
            <Cell className={`${MONO} w-[70px]`}>646.7 FPS</Cell>
        </footer>
    );
}

const PINNED = [
    { name: '风车', art: <path d="M12 12C5 13 0 9 4 3c4-3 9 1 8 9zM12 12c-1-7 3-12 9-8 3 4-1 9-9 8zM12 12c7-1 12 3 8 9-4 3-9-1-8-9zM12 12c1 7-3 12-9 8-3-4 1-9 9-8z" fill="#e8e8e8" stroke="#000" strokeWidth=".8" /> },
    { name: '浏览器', art: <path d="M20 6C15 1 5 4 5 12c0 7 8 10 13 5 2-3 1-6-2-7-4 0-5 4-2 5M16 6c-6-1-9 5-7 8 1 3 4 4 6 3" fill="none" stroke="#d8d8d8" strokeWidth="1.300" /> },
];

const APPS = [
    { name: 'Edge', art: <path d="M2 11C3 4 8 1 13 1c6 0 9 4 9 9v3H9c0 5 7 6 12 3v5c-8 4-17 0-17-8 0-3 2-6 5-7-1 1-2 2-2 3h8c0-6-9-5-13 2z" fill="#0a78d7" /> },
    { name: '应用商店', art: <><path d="M2 7h20v13l-20 2z" fill="#fff" /><path d="M8 7V4c0-3 8-3 8 0v3" fill="none" stroke="#fff" strokeWidth="1.500" /><path d="M6 10h5v4H6zM12 10h6v4h-6zM6 15h5v4H6zM12 15h6v4h-6z" fill="#010b0e" /></> },
    { name: '文件资源管理器', art: <><path d="M2 3h8l2 2h10v16H2z" fill="#f5ce62" /><path d="M2 8h20v5H2z" fill="#fce7a4" /><path d="M5 21v-8h14v8h-4v-4H9v4z" fill="#3ba4dc" /></> },
    { name: '360浏览器', run: true, art: <><circle cx="12" cy="12" r="10" fill="#56bb2c" /><path d="M19 13H7c0 5 6 6 11 3-4 6-15 4-15-4 0-9 15-10 16-1zM8 10h7c0-4-7-4-7 0z" fill="#fff" /></> },
    { name: '便笺', run: true, art: <><rect x="1" y="1" width="22" height="22" rx="3" fill="#f29a1d" /><path d="M4 4h14v14l-3 3H4z" fill="#fff6d6" /><path d="M6 8h9M6 11h7M6 14h5" stroke="#a86010" /><path d="M9 17l2-5 9-8 2 2-8 8z" fill="#8d4a10" /></> },
    { name: '广联达', run: true, active: true, art: <><rect x="1" y="1" width="22" height="22" rx="5" fill="#0f8df0" /><path d="M12.500 4v12c0 4-6 4-7 0M4 12h15v4M8.500 8l4-4 4 4" fill="none" stroke="#fff" strokeWidth="1.600" /></> },
    { name: '加密锁', run: true, art: <><path d="M5 9h9v12H5z" fill="#eee" /><path d="M7 12h5M7 15h5M7 18h5" stroke="#222" strokeWidth="1.500" /><path d="M11 6c0-6 9-5 8 0-1 3-4 3-4 7M15 15v3" fill="none" stroke="#f4ea10" strokeWidth="3" /></> },
    { name: '计价软件', run: true, art: <><rect x="1" y="1" width="22" height="22" rx="3" fill="#eb6a2f" /><path d="M1 12h11v11H4q-3 0-3-3z" fill="#3aa64a" /><path d="M12 12h11v8q0 3-3 3h-8z" fill="#2f8de0" /><path d="M12 1h8q3 0 3 3v8H12z" fill="#f6c02c" /><path d="M5 5l3 3 4-4 4 4 3-3v14H5z" fill="#fff" /><path d="M8 11h8M8 14h8M8 17h8" stroke="#3aa64a" /></> },
];

const AppButton = ({ app }) => (
    <button aria-label={app.name} className={`w-12 flex flex-col items-center justify-between pt-2 ${app.active ? 'bg-[#36434a]' : ''}`}>
        <svg className="size-6" viewBox="0 0 24 24">{app.art}</svg>
        {app.run && <span className={`h-0.5 bg-[#76b9ed] ${app.active ? 'w-full' : 'w-10'}`} />}
    </button>
);

function Taskbar() {
    return (
        <div className="flex h-10 shrink-0 bg-[#010b0e] text-white">
            <button aria-label="开始" className="w-12 flex items-center justify-center bg-black">
                <svg className="w-[17px] h-4" viewBox="0 0 17 16"><path d="M0 2.500L7 1.500V7.500H0zM8 1.300L17 0v7.500H8zM0 8.500h7v6L0 13.500zM8 8.500h9V16l-9-1.300z" fill="#fff" /></svg>
            </button>
            <div className="w-[344px] flex items-center bg-[#333] px-[9px] gap-[6px]">
                <svg className="size-[21px]" viewBox="0 0 21 21" aria-hidden="true"><circle cx="10.500" cy="10.500" r="8.500" fill="none" stroke="#fff" strokeWidth="2.500" /></svg>
                <input aria-label="搜索" placeholder="在这里输入你要搜索的内容" className="flex-1 bg-transparent text-sm outline-none placeholder:text-[#a6a6a6]" />
                <svg className="w-6 h-[18px]" viewBox="0 0 24 18" aria-hidden="true"><rect x="9.500" y="1" width="5" height="10" rx="2.500" fill="none" stroke="#b8b8b8" /><path d="M6.500 8c0 7 11 7 11 0M12 13v4" fill="none" stroke="#b8b8b8" /></svg>
            </div>
            <div className="flex pl-0.5 gap-[5px]">
                <div className="flex gap-px">{PINNED.map(a => <AppButton key={a.name} app={a} />)}</div>
                <div className="flex gap-px">{APPS.map(a => <AppButton key={a.name} app={a} />)}</div>
            </div>
            <div className="ml-auto flex items-center gap-2 pr-[26px] leading-4">
                <div className="text-center mr-3 leading-[17px]">30%<br />CPU使用</div>
                <svg className="w-4 h-3" viewBox="0 0 16 12"><path d="M2 9l6-6 6 6" fill="none" stroke="#fff" strokeWidth="1.300" /></svg>
                <svg className="w-4 h-4" viewBox="0 0 16 16"><path d="M4.500 5.500h10v7h-10z" fill="none" stroke="#fff" /><path d="M6 7h7v4H6zM1 3h4v4H4v3H2V7H1z" fill="#fff" /></svg>
                <svg className="w-4 h-4" viewBox="0 0 16 16"><path d="M2 15C2 8 7 3 14 3M5 15c0-5 4-9 9-9M8 15c0-3 3-6 6-6M11 15c0-2 1-3 3-3" fill="none" stroke="#ddd" /></svg>
                <svg className="w-4 h-4" viewBox="0 0 16 16"><path d="M1 6h2l4-4v12l-4-4H1zM9 6q1.500 2 0 4M11 4q3 4 0 8M13 2q4.500 6 0 12" fill="none" stroke="#fff" /></svg>
                <span className="text-sm">中</span>
                <svg className="w-4 h-4 mx-1" viewBox="0 0 16 16"><path d="M1 1l13-1 2 13-12 3z" fill="#f4511e" /><path d="M12 4C9 3 5 3.500 5 6c0 2.500 7 1.500 7 4s-5 2.500-8 1.500" fill="none" stroke="#fff" strokeWidth="2" /></svg>
                <div className="text-center w-[68px] leading-[19px]">11:19<br />2017/7/8</div>
                <svg className="w-4 h-4 ml-1.5" viewBox="0 0 16 16"><path d="M.5 1.500h15v10h-5l-2.500 3-2.500-3h-5z" fill="none" stroke="#fff" /></svg>
            </div>
        </div>
    );
}

export default function App() {
    return (
        <div className="relative h-screen flex flex-col overflow-hidden bg-[#f0f0f0] text-black text-xs leading-4 font-['Noto_Sans','Noto_Sans_CJK_SC',sans-serif]">
            <TitleBar />
            <MenuRow />
            <MainTools />
            <main className="flex flex-1 min-h-0">
                <NavPane />
                <div className="flex flex-col flex-1 min-w-0">
                    <EditTools />
                    <Model />
                    <BottomPanel />
                </div>
            </main>
            <StatusBar />
            <Taskbar />
            <PropertyDialog />
        </div>
    );
}
